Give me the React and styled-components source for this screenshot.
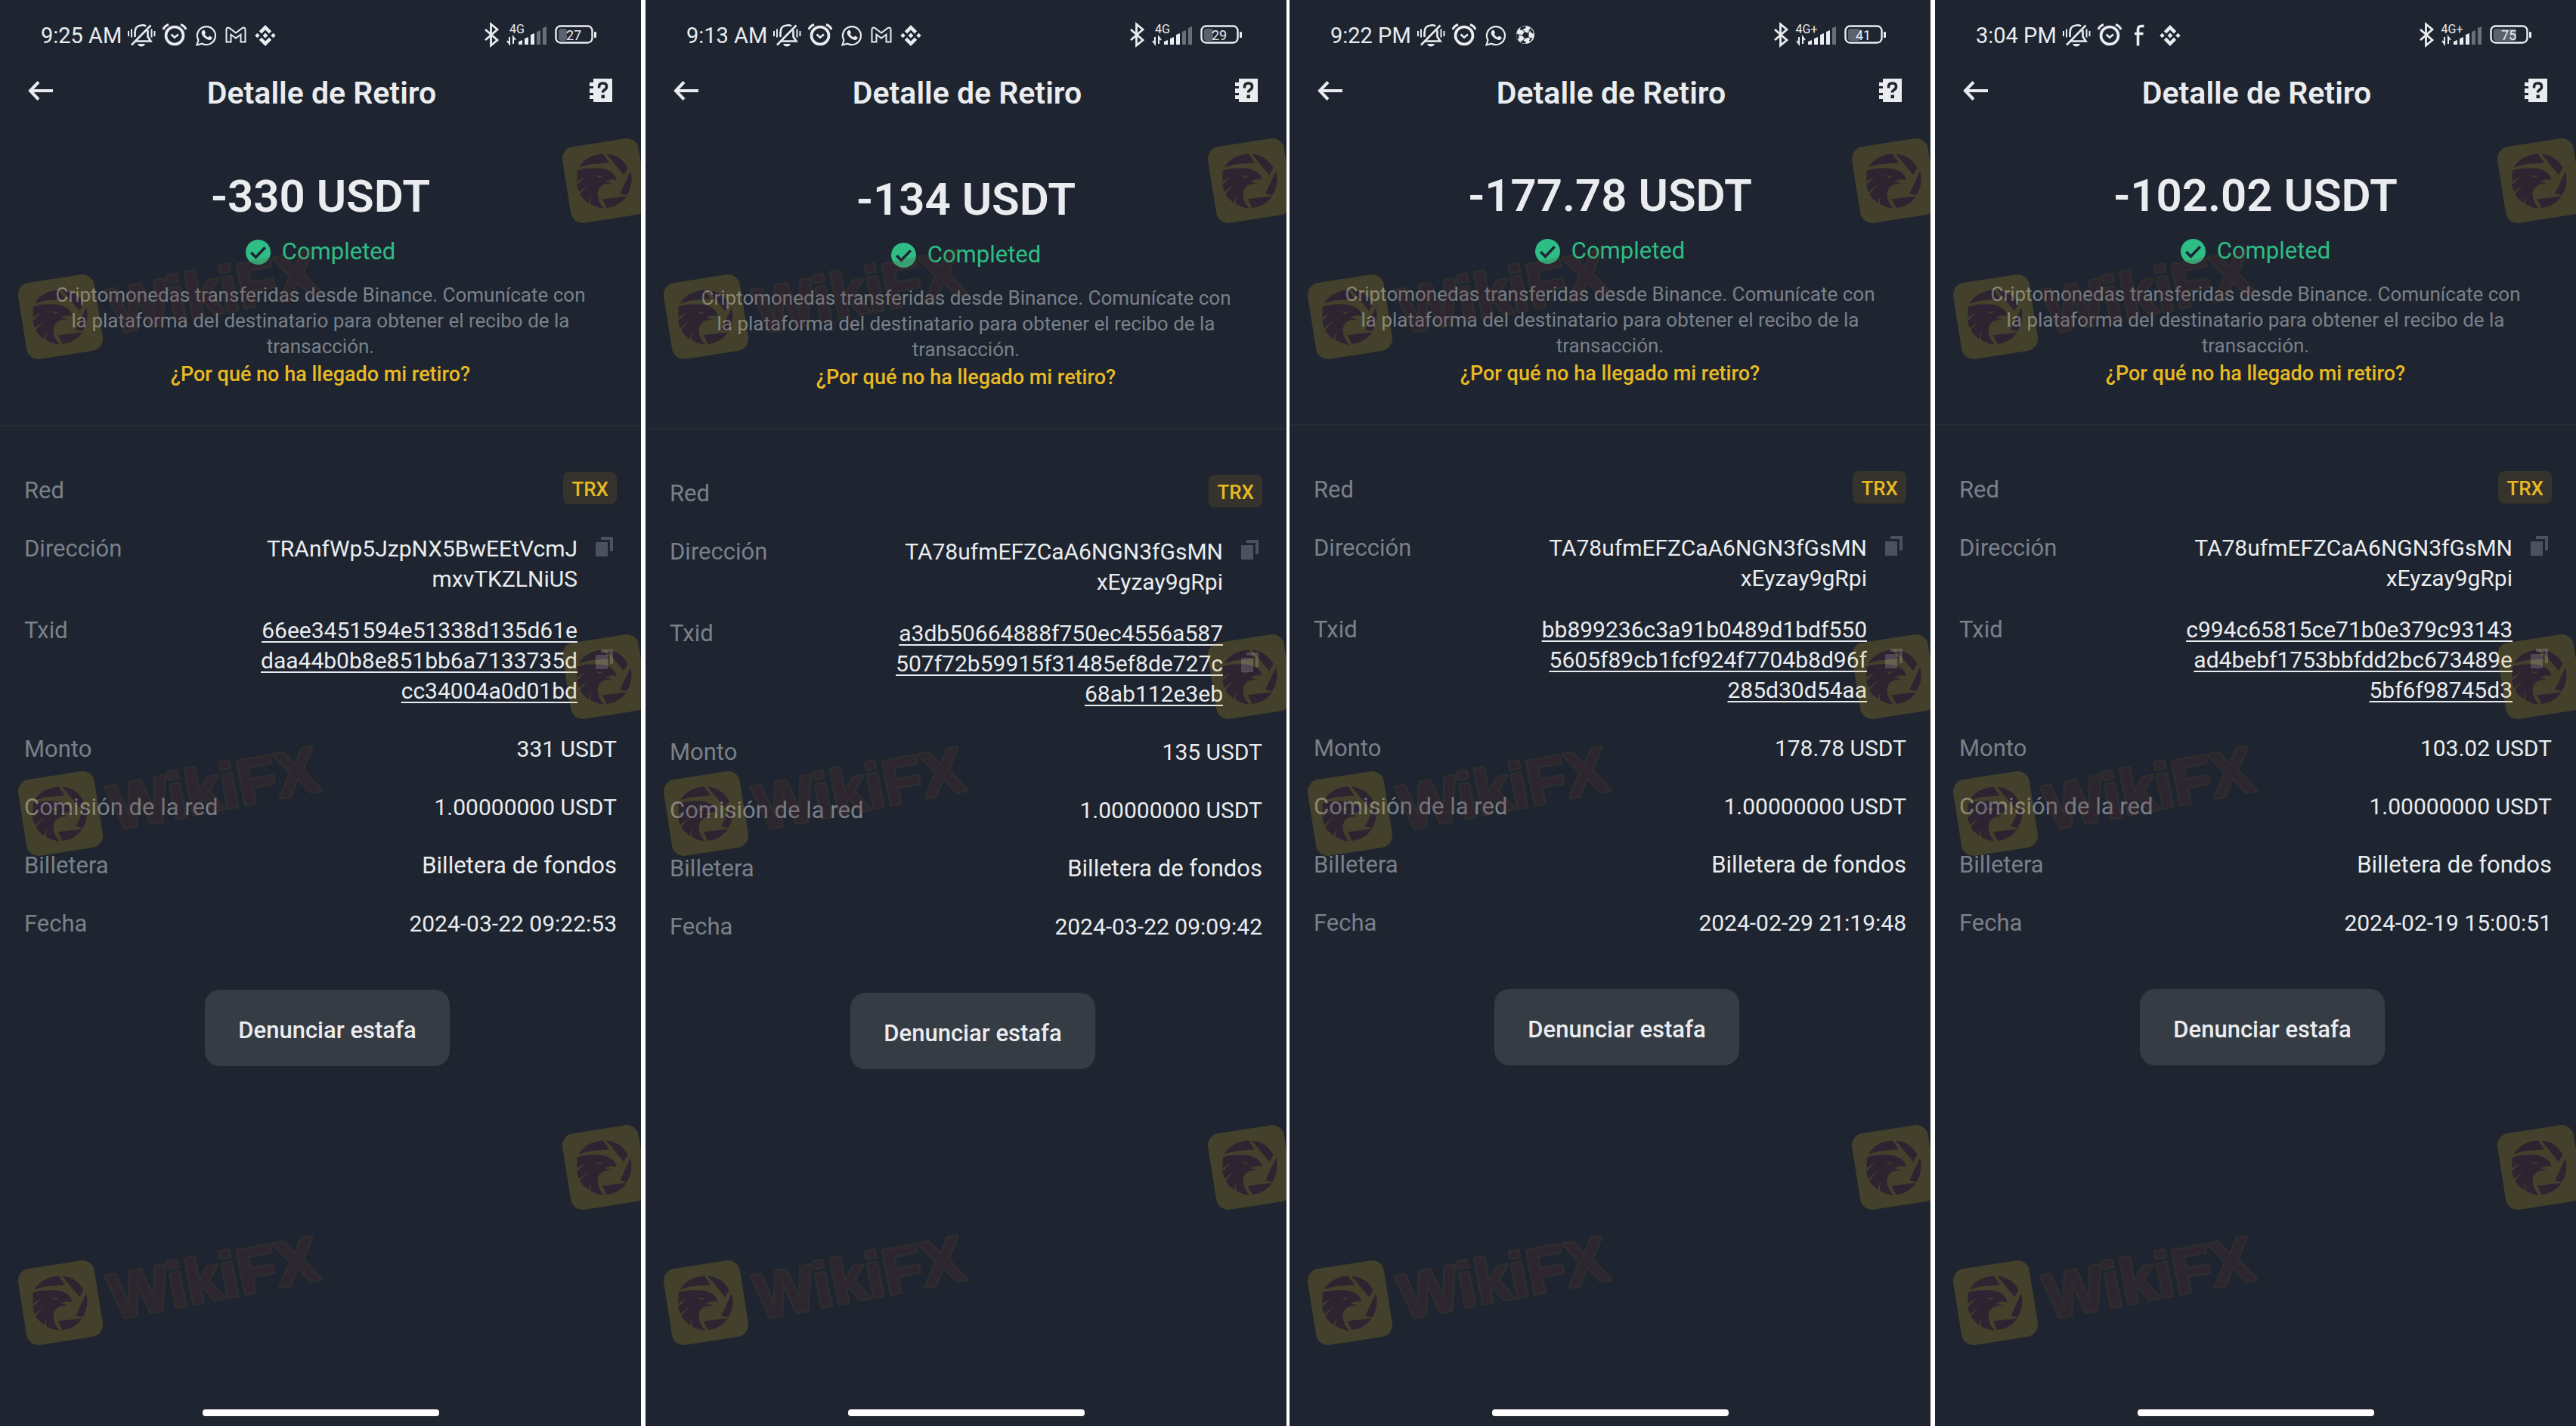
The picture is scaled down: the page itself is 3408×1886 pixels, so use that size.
import React from "react";
import styled, { createGlobalStyle } from "styled-components";

const withdrawals = [
    {
        id: 1,
        time: "9:25 AM",
        apps: ["bell", "alarm", "whatsapp", "gmail", "binance"],
        network: "4G",
        bars: 3,
        battery: 27,
        space: 77,
        total: "-330 USDT",
        address: ["TRAnfWp5JzpNX5BwEEtVcmJ", "mxvTKZLNiUS"],
        txid: ["66ee3451594e51338d135d61e", "daa44b0b8e851bb6a7133735d", "cc34004a0d01bd"],
        amount: "331 USDT",
        date: "2024-03-22 09:22:53",
    },
    {
        id: 2,
        time: "9:13 AM",
        apps: ["bell", "alarm", "whatsapp", "gmail", "binance"],
        network: "4G",
        bars: 3,
        battery: 29,
        space: 81,
        total: "-134 USDT",
        address: ["TA78ufmEFZCaA6NGN3fGsMN", "xEyzay9gRpi"],
        txid: ["a3db50664888f750ec4556a587", "507f72b59915f31485ef8de727c", "68ab112e3eb"],
        amount: "135 USDT",
        date: "2024-03-22 09:09:42",
    },
    {
        id: 3,
        time: "9:22 PM",
        apps: ["bell", "alarm", "whatsapp", "ball"],
        network: "4G+",
        bars: 4,
        battery: 41,
        space: 76,
        total: "-177.78 USDT",
        address: ["TA78ufmEFZCaA6NGN3fGsMN", "xEyzay9gRpi"],
        txid: ["bb899236c3a91b0489d1bdf550", "5605f89cb1fcf924f7704b8d96f", "285d30d54aa"],
        amount: "178.78 USDT",
        date: "2024-02-29 21:19:48",
    },
    {
        id: 4,
        time: "3:04 PM",
        apps: ["bell", "alarm", "facebook", "binance"],
        network: "4G+",
        bars: 3,
        battery: 75,
        space: 76,
        total: "-102.02 USDT",
        address: ["TA78ufmEFZCaA6NGN3fGsMN", "xEyzay9gRpi"],
        txid: ["c994c65815ce71b0e379c93143", "ad4bebf1753bbfdd2bc673489e", "5bf6f98745d3"],
        amount: "103.02 USDT",
        date: "2024-02-19 15:00:51",
    },
];

const marks = [
    { top: 116, left: 720 },
    { top: 296, left: 0, named: true },
    { top: 772, left: 720 },
    { top: 953, left: 0, named: true },
    { top: 1421, left: 720 },
    { top: 1600, left: 0, named: true },
];

export default function App() {
    return (
        <>
            <GlobalStyle />
            <Page>
                {withdrawals.map((item) => (
                    <WithdrawalScreen key={item.id} item={item} />
                ))}
            </Page>
        </>
    );
}

function WithdrawalScreen({ item }) {
    return (
        <Screen>
            <StatusBar>
                <Time>{item.time}</Time>
                {item.apps.map((name) => (
                    <AppIcon key={name} name={name} />
                ))}
                <StatusRight network={item.network} bars={item.bars} battery={item.battery} />
            </StatusBar>

            <Header>
                <IconButton aria-label="Volver">
                    <svg width="34" height="48" viewBox="0 0 34 48" fill="none" stroke="#eaecef">
                        <path d="M2.5 21H33" strokeWidth="4" />
                        <path d="M14 9.5L3 21l11 11.5" strokeWidth="4" />
                    </svg>
                </IconButton>
                <Title>Detalle de Retiro</Title>
                <IconButton aria-label="Ayuda">
                    <svg width="30" height="48" viewBox="0 0 30 48">
                        <path d="M5 5h25v31H5v-4H0v-5h5v-3H0v-6h5v-3H0v-5h5z" fill="#eaecef" />
                        <path
                            d="M12.5 17.5v-1.500q0-5 5-5t5 4.500q0 3-3 4.500q-2 1.200-2 3.500"
                            fill="none"
                            stroke="#1e2530"
                            strokeWidth="3.600"
                        />
                        <rect x="15.500" y="26.500" width="4.500" height="4.500" fill="#1e2530" />
                    </svg>
                </IconButton>
            </Header>

            <Summary $space={item.space}>
                <Total>{item.total}</Total>
                <Status>
                    <svg width="33" height="33" viewBox="0 0 32 32">
                        <circle cx="16" cy="16" r="16" fill="#2ebd85" />
                        <path d="M7 16.500l6 6L25 10" fill="none" stroke="#1e2530" strokeWidth="3.400" />
                    </svg>
                    Completed
                </Status>
                <Note>
                    <span>Criptomonedas transferidas desde Binance. Comunícate con</span>
                    <span>la plataforma del destinatario para obtener el recibo de la</span>
                    <span>transacción.</span>
                </Note>
                <HelpLink href="#ayuda">¿Por qué no ha llegado mi retiro?</HelpLink>
            </Summary>

            <Details>
                <Row>
                    <Label>Red</Label>
                    <Value>
                        <Badge>TRX</Badge>
                    </Value>
                </Row>
                <Row $tight>
                    <Label>Dirección</Label>
                    <Value>
                        <Lines>
                            {item.address.map((line) => (
                                <span key={line}>{line}</span>
                            ))}
                        </Lines>
                        <CopyButton label="Copiar dirección" />
                    </Value>
                </Row>
                <Row>
                    <Label>Txid</Label>
                    <Value $middle>
                        <TxLink href="#txid">
                            {item.txid.map((line) => (
                                <span key={line}>{line}</span>
                            ))}
                        </TxLink>
                        <CopyButton label="Copiar txid" />
                    </Value>
                </Row>
                <Row>
                    <Label>Monto</Label>
                    <Value>{item.amount}</Value>
                </Row>
                <Row>
                    <Label>Comisión de la red</Label>
                    <Value>1.00000000 USDT</Value>
                </Row>
                <Row>
                    <Label>Billetera</Label>
                    <Value $words>Billetera de fondos</Value>
                </Row>
                <Row>
                    <Label>Fecha</Label>
                    <Value>{item.date}</Value>
                </Row>
            </Details>

            <Actions>
                <ReportButton>Denunciar estafa</ReportButton>
            </Actions>

            <HomeBar />

            <Watermarks aria-hidden="true">
                {marks.map((mark) => (
                    <Mark key={mark.top} $top={mark.top} $left={mark.left} viewBox="0 0 450 200">
                        <Eagle />
                        {mark.named && (
                            <MarkText x="151" y="145" transform="rotate(-11 151 145)">
                                WikiFX
                            </MarkText>
                        )}
                    </Mark>
                ))}
            </Watermarks>
        </Screen>
    );
}

function CopyButton({ label }) {
    return (
        <CopyIconButton aria-label={label}>
            <svg width="23" height="26" viewBox="0 0 23 26" fill="#4a525d">
                <rect x="0" y="7" width="16" height="19" />
                <path d="M7 0h16v19h-4V4H7z" />
            </svg>
        </CopyIconButton>
    );
}

function AppIcon({ name }) {
    if (name === "bell") {
        return (
            <StatusIcon $width={44} viewBox="0 0 44 36">
                <path d="M28 5.500Q25 3.800 22 4.500C14.500 5 13.500 10 13.500 15M30.500 11v8.500l4 6H14" />
                <path d="M13.500 14v6" />
                <path d="M9 30.500L34.500 4.500" />
                <path d="M17 29h10q-1.500 3.500-5 3.500t-5-3.500z" fill="#eaecef" stroke="none" />
                <path d="M5 12v7M9 9.500v11M35.500 9.500v11M39.500 12v7" strokeWidth="2" />
            </StatusIcon>
        );
    }
    if (name === "alarm") {
        return (
            <StatusIcon $width={44} viewBox="0 0 44 36">
                <circle cx="22" cy="18" r="11.500" strokeWidth="3.600" />
                <path d="M7 10Q8.500 5.500 14 3.500M37 10Q35.500 5.500 30 3.500" strokeWidth="3" />
                <path d="M17.500 16.500l4.500 4 5-4" />
            </StatusIcon>
        );
    }
    if (name === "whatsapp") {
        return (
            <StatusIcon $width={40} viewBox="0 0 40 36">
                <path d="M7.500 30.500l2-6.500a12 12 0 1 1 4.800 4.700z" strokeWidth="2.200" />
                <path
                    d="M14.500 12q2.500-2.500 3.500 0l1 2.500-1.300 1.800q1.800 3 4.600 4.200l1.700-2 3.500 1.700q.8 1-1.500 3.200-2 1.500-6-.8-5-3-6.200-7-.5-2 .7-3.600z"
                    fill="#eaecef"
                    stroke="none"
                />
            </StatusIcon>
        );
    }
    if (name === "gmail") {
        return (
            <StatusIcon $width={40} viewBox="0 0 40 36">
                <path
                    d="M6.500 26.500V10.500q0-4 3.800-2.500L19 14.500 27.700 8q3.800-1.500 3.800 2.500v16h-6V16.800L19 21.500l-6.500-4.700v9.700z"
                    strokeWidth="2"
                />
            </StatusIcon>
        );
    }
    if (name === "ball") {
        return (
            <StatusIcon $width={40} viewBox="0 0 40 36">
                <g transform="translate(2 0)">
                    <circle cx="17" cy="17" r="12" fill="#eaecef" stroke="none" />
                    <g fill="#1e2530" stroke="none" transform="translate(-2 0)">
                        <path d="M18 13l5.500 2 0 5.500-5.500 1.500-3.500-4.500z" />
                        <path d="M13 6.500l6-1 1 2-5 3-3.500 0z" />
                        <path d="M25.500 8l3.500 4 1 4-4-2.500-1.500-4z" />
                        <path d="M7.500 15l3 2 0 4.500-2 1.500q-2-4-1-8z" />
                        <path d="M14.500 24.500l5 1.500 0 2.500q-4 .5-7-2z" />
                        <path d="M28.500 21l-3 5-1.500-1 2-4z" />
                    </g>
                    <path
                        d="M13 10.500l3 2.500M22.500 10l-1 5M8.500 17l4 .5M16 22l-2 3M21.500 20.500l3 1.500"
                        stroke="#1e2530"
                        strokeWidth="1"
                    />
                </g>
            </StatusIcon>
        );
    }
    if (name === "facebook") {
        return (
            <StatusIcon $width={40} viewBox="0 0 40 36">
                <path d="M15.500 31.500V10q0-4.500 4.500-4.500h3.500M11 15.500h11.500" strokeWidth="3.600" />
            </StatusIcon>
        );
    }
    return (
        <StatusIcon $width={40} viewBox="0 0 40 36">
            <g fill="#eaecef" stroke="none" transform="translate(-1 0)">
                <path d="M19 4l8.200 8.200-3.200 3.200-5-5-5 5-3.200-3.200z" />
                <path d="M19 32l8.200-8.200-3.200-3.200-5 5-5-5-3.200 3.200z" />
                <path d="M8.500 14.800l3.200 3.200-3.200 3.200L5.300 18zM29.500 14.800l3.200 3.200-3.200 3.200-3.200-3.200zM19 14.600l3.400 3.400-3.400 3.400-3.400-3.400z" />
            </g>
        </StatusIcon>
    );
}

function StatusRight({ network, bars, battery }) {
    const heights = [6, 10, 15, 19, 24];
    return (
        <Indicators viewBox="0 0 152 36">
            <path d="M5 10l16 14-8.500 7V3L21 10 5 24" fill="none" stroke="#eaecef" strokeWidth="2.800" />
            <NetworkText x="47" y="15">
                {network}
            </NetworkText>
            <path d="M37 20v9l-3-4M42 29v-9l3 4" fill="none" stroke="#eaecef" strokeWidth="2" />
            {heights.map((height, index) => (
                <path
                    key={height}
                    d={`M${49 + index * 8} 30v${2 - height}l5-2V30z`}
                    fill={index < bars ? "#eaecef" : "#6b7078"}
                />
            ))}
            <rect x="102" y="9" width={Math.round(battery * 0.4)} height="16" rx="3" fill="#5c626b" />
            <rect x="98.500" y="5.500" width="48" height="22" rx="6" fill="none" stroke="#eaecef" strokeWidth="2.400" />
            <rect x="149" y="13" width="3" height="8" rx="1" fill="#eaecef" />
            <BatteryText x="122" y="24">
                {battery}
            </BatteryText>
        </Indicators>
    );
}

// badge with the eagle head framed by camera shutter blades
function Eagle() {
    return (
        <g transform="translate(80 123)">
            <rect x="-51" y="-51" width="102" height="102" rx="16" fill="#d9aa1c" transform="rotate(-9)" />
            <g transform="translate(-71 -123) scale(0.334)" fill="#662434">
                <path d="M110 316Q140 266 206 262L230 297 150 304z" />
                <path d="M219 262Q278 268 304 318L288 346z" />
                <path d="M315 330Q328 384 300 426L273 420z" />
                <path d="M203 441L299 430Q270 472 220 476z" />
                <path d="M104 328Q150 314 205 320Q256 332 258 366Q244 360 226 366L212 372 242 378 214 382Q184 392 184 424Q186 454 210 479Q160 474 124 436Q98 400 103 362z" />
                <path
                    d="M178 345q12 8 26 2l-4 8q-14 2-22-10zM102 372l34-22-30 32zM108 416l40-34-36 42zM160 426q-8 24-2 42l-8-4q-2-20 10-38z"
                    fill="#d9aa1c"
                />
            </g>
        </g>
    );
}

const GlobalStyle = createGlobalStyle`
    * {
        box-sizing: border-box;
    }
    body {
        margin: 0;
        background: #1e2530;
        color: #eaecef;
        font-family: Roboto, "Liberation Sans", sans-serif;
    }
    button {
        border: 0;
        padding: 0;
        background: none;
        color: inherit;
        font-family: inherit;
        cursor: pointer;
    }
    svg {
        display: block;
        flex-shrink: 0;
    }
`;

const Page = styled.main`
    min-height: 100vh;
    display: flex;
    background: #ffffff;
`;
const Screen = styled.section`
    flex: 1;
    min-width: 0;
    display: flex;
    flex-direction: column;
    position: relative;
    overflow: hidden;
    background: #1e2530;

    & + & {
        margin-left: 6px;
    }
    &:nth-child(3) {
        margin-left: 4px;
    }
`;
const StatusBar = styled.div`
    display: flex;
    align-items: center;
    padding: 27px 59px 0 54px;
    height: 67px;
`;
const Time = styled.span`
    width: 111px;
    font-size: 29px;
    line-height: 40px;
    white-space: nowrap;
`;
const StatusIcon = styled.svg`
    width: ${(props) => props.$width}px;
    height: 36px;
    fill: none;
    stroke: #eaecef;
    stroke-width: 2.6;
`;
const Indicators = styled.svg`
    width: 152px;
    height: 36px;
    margin-left: auto;
`;
const NetworkText = styled.text`
    font-size: 16px;
    text-anchor: middle;
    fill: #eaecef;
`;
const BatteryText = styled.text`
    font-size: 18px;
    text-anchor: middle;
    fill: #eaecef;
`;
const Header = styled.header`
    display: flex;
    justify-content: space-between;
    margin-top: 32px;
    padding: 0 38px 0 37px;
`;
const IconButton = styled.button`
    height: 48px;
`;
const Title = styled.h1`
    margin: 0;
    font-size: 41px;
    line-height: 48px;
    font-weight: 600;
`;
const Summary = styled.div`
    display: flex;
    flex-direction: column;
    align-items: center;
    padding: ${(props) => props.$space}px 32px 50px;
    border-bottom: 2px solid #262d37;
    text-align: center;
`;
const Total = styled.p`
    margin: 0 0 17px;
    font-size: 60px;
    line-height: 72px;
    font-weight: 600;
`;
const Status = styled.p`
    display: flex;
    align-items: center;
    gap: 15px;
    margin: 0 0 20px;
    font-size: 31px;
    line-height: 40px;
    color: #2ebd85;
`;
const Note = styled.p`
    margin: 0 0 3px;
    font-size: 26px;
    line-height: 34px;
    color: #7a8089;

    span {
        display: block;
    }
`;
const HelpLink = styled.a`
    font-size: 27px;
    line-height: 34px;
    font-weight: 500;
    color: #e8b923;
    text-decoration: none;
`;
const Details = styled.dl`
    margin: 65px 0 0;
    padding: 0 32px;
    font-size: 30px;
    line-height: 40px;
`;
const Row = styled.div`
    display: flex;
    justify-content: space-between;
    margin-bottom: ${(props) => (props.$tight ? 28 : 37)}px;

    &:last-child {
        margin-bottom: 0;
    }
`;
const Label = styled.dt`
    font-size: 31px;
    color: #7a8089;
`;
const Value = styled.dd`
    display: flex;
    align-items: ${(props) => (props.$middle ? "center" : "flex-start")};
    margin: 0;
    font-size: ${(props) => (props.$words ? 31 : 30)}px;
    text-align: right;
`;
const Badge = styled.span`
    margin: -5px 0 2px;
    padding: 4px 11px 0;
    border-radius: 8px;
    background: #35332c;
    color: #e8b923;
    font-size: 26px;
    line-height: 39px;
    font-weight: 500;
`;
const Lines = styled.span`
    span {
        display: block;
    }
`;
const TxLink = styled.a`
    color: inherit;
    text-decoration: underline;
    text-decoration-thickness: 2px;
    text-underline-offset: 4px;

    span {
        display: block;
    }
`;
const CopyIconButton = styled.button`
    margin: 4px 5px 8px 24px;
`;
const Actions = styled.div`
    display: flex;
    justify-content: center;
    margin-top: 67px;
    padding-left: 18px;
`;
const ReportButton = styled.button`
    padding: 6px 44px 0;
    border-radius: 20px;
    background: #363c44;
    font-size: 31px;
    line-height: 95px;
    font-weight: 500;
`;
const HomeBar = styled.div`
    align-self: center;
    width: 313px;
    height: 9px;
    margin: auto 0 13px;
    border-radius: 4px;
    background: #ffffff;
`;
const Watermarks = styled.div`
    position: absolute;
    inset: 0;
    overflow: hidden;
    pointer-events: none;
`;
const Mark = styled.svg`
    position: absolute;
    top: ${(props) => props.$top}px;
    left: ${(props) => props.$left}px;
    width: 450px;
    height: 200px;
    opacity: 0.2;
`;
const MarkText = styled.text`
    font-family: "Liberation Sans", sans-serif;
    font-size: 84px;
    font-weight: bold;
    fill: #6a2c30;
    stroke: #6e5226;
    stroke-width: 5;
    stroke-linejoin: round;
    paint-order: stroke;
`;
